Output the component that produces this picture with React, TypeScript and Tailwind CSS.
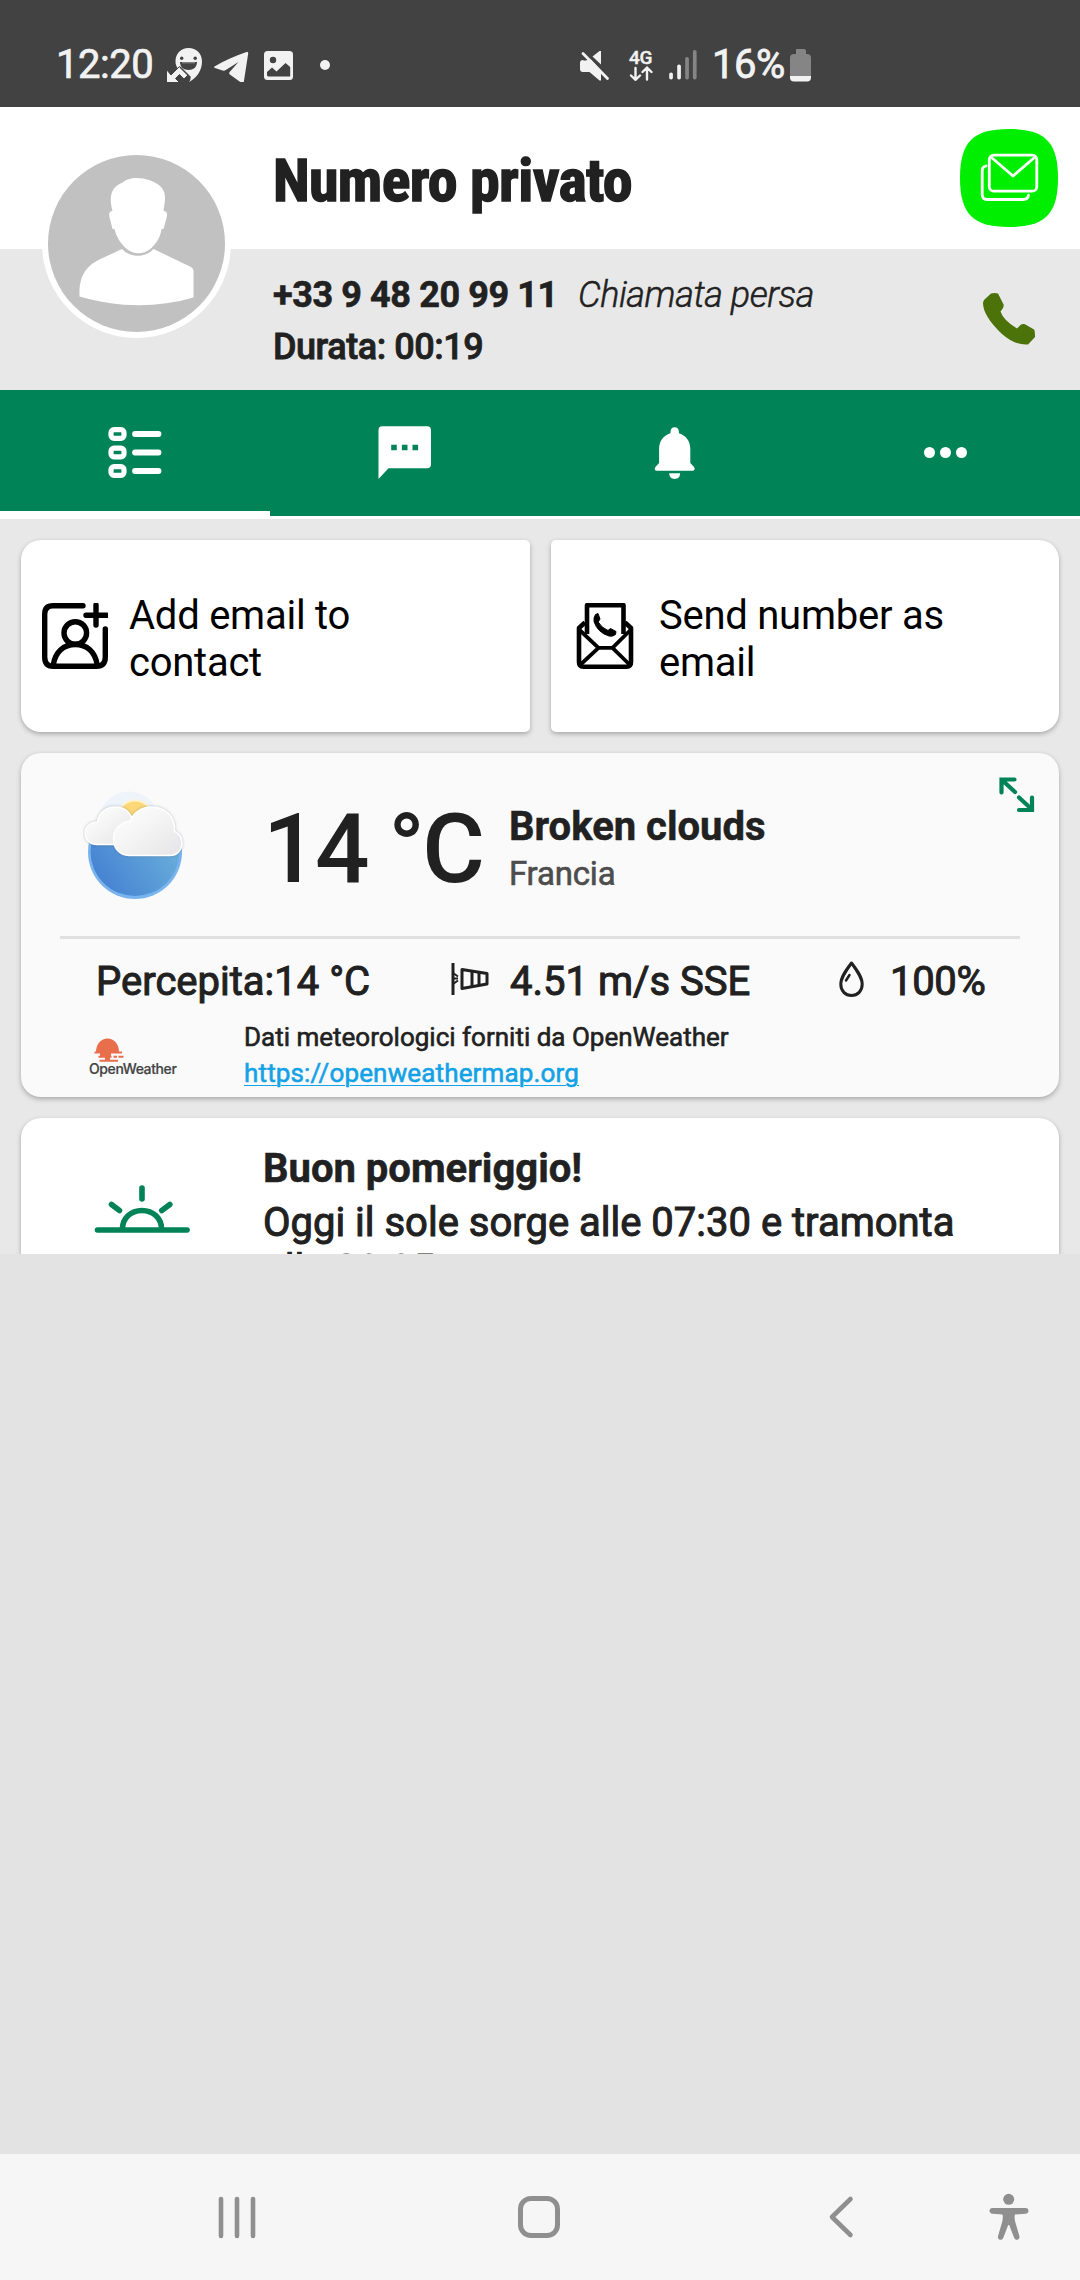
import { type ReactNode } from "react";

const cardShadow = "shadow-[0_2px_5px_rgba(0,0,0,0.28)]";

function StatusBar() {
  return (
    <div className="flex h-[107px] shrink-0 items-start bg-[#424242] pt-[48px] text-[40px] leading-[34px] text-[#f2f2f2]">
      <div className="ml-[56px] w-[111px] tracking-[-0.5px] [-webkit-text-stroke:0.7px]">12:20</div>
      <svg className="h-[34px] w-[35px]" viewBox="167 48 35 34">
        <path
          d="M188.5 48c8 0 13.500 5.500 13.500 13.500 0 9-5 16-13 20.500l1-5-7-5c-5-2-7.500-6-7.500-10.500C175.500 53.500 181 48 188.500 48z"
          fill="#f2f2f2"
        />
        <circle cx="181.700" cy="58.300" r="1.700" fill="#424242" />
        <circle cx="195.200" cy="58.300" r="1.700" fill="#424242" />
        <path d="M180 62h17c0 5-3.500 8-8.500 8s-8.500-3-8.500-8z" fill="#424242" />
        <path d="M182 62.300h13v1h-13z" fill="#9a9a9a" />
        <path
          d="M166.500 69.500v13h13l-4-4 4-4 4.500 4.500 4-4-8.500-8.500-8.500 8.500z"
          fill="#f2f2f2"
          stroke="#424242"
          strokeWidth="1"
        />
        <path d="M180 67l10 10c0 2 0 3-2 5" fill="none" stroke="#424242" strokeWidth="1.500" />
      </svg>
      <svg className="ml-[12px] h-[34px] w-[35px]" viewBox="214 48 35 34">
        <path
          d="M214.500 66.500c9-5.500 20-10.500 32-14.500 1.200-.3 1.800.3 1.700 1.500l-4.400 28.500c-.3 1.500-1.300 1.600-2.300.9l-11.300-8.200c-1.300-.9-1.300-1.900-.4-2.900l8.700-9.800-12.300 7.800c-1.600 1-2.700 1-4.400.5l-6.800-2.400c-1-.3-1.100-.9-.5-1.400z"
          fill="#f2f2f2"
        />
      </svg>
      <svg className="ml-[15px] h-[34px] w-[29px]" viewBox="264 48 29 34">
        <rect x="264" y="51" width="29" height="29" rx="3.500" fill="#f2f2f2" />
        <circle cx="273" cy="60" r="3.200" fill="#424242" />
        <path d="M267 72l5-4.500 4.500 4 9-8.500 4.700 4v9.500h-22l-1.200-1z" fill="#424242" />
      </svg>
      <div className="mt-[12px] ml-[27px] h-[10px] w-[10px] rounded-full bg-[#f2f2f2]" />

      <svg className="ml-[250px] h-[34px] w-[30px]" viewBox="580 48 30 34">
        <path d="M583 60l18 18.500v2h-1.500l-10-8.500h-6.500c-2 0-3-1-3-3v-6c0-2 1-3 3-3zM592.500 56.500l7-5.500h1.500v13.500z" fill="#f2f2f2" />
        <path d="M582 61l9-1.500 10 11v9l-11-8h-8z" fill="#f2f2f2" />
        <path d="M583 53.500l24.500 25" stroke="#f2f2f2" strokeWidth="2.800" strokeLinecap="round" />
      </svg>
      <div className="ml-[19px] w-[24px]">
        <div className="mt-[3px] text-[19px] leading-[14px] font-medium tracking-[-0.2px] [-webkit-text-stroke:0.4px]">4G</div>
        <svg className="mt-[1px] h-[15px] w-[24px]" viewBox="629 66 24 15" fill="none" stroke="#f2f2f2" strokeWidth="2.400" strokeLinecap="round">
          <path d="M635.500 68v11.500M631 75.500l4.500 4.300 4.500-4.300M647 79.500V68M642.500 72l4.500-4.300 4.500 4.300" />
        </svg>
      </div>
      <svg className="ml-[16px] h-[34px] w-[28px]" viewBox="669 48 28 34">
        <rect x="669.200" y="72.500" width="3.700" height="7" rx="1.800" fill="#f2f2f2" />
        <rect x="677.200" y="64.500" width="3.700" height="15" rx="1.800" fill="#f2f2f2" />
        <rect x="685.200" y="57" width="3.700" height="22.500" rx="1.800" fill="#858585" />
        <rect x="692.900" y="50" width="3.700" height="29.500" rx="1.800" fill="#858585" />
      </svg>
      <div className="ml-[15px] w-[78px] tracking-[-0.5px] [-webkit-text-stroke:0.8px]">16%</div>
      <svg className="h-[34px] w-[21px]" viewBox="790 48 21 34">
        <path d="M796 49h8q2 0 2 2v3h1q4 0 4 4v19H790V58q0-4 4-4h2v-3q0-2 0-2z" fill="#858585" />
        <path d="M790 76h21v1.500q0 4-4 4h-13q-4 0-4-4z" fill="#f2f2f2" />
      </svg>
    </div>
  );
}

function CallHeader() {
  return (
    <header className="relative shrink-0 text-[#212121]">
      <div className="flex h-[142px] items-start bg-white pl-[273px]">
        <h1 className="mt-[38px] w-[687px] font-['Roboto_Condensed'] text-[60px] leading-[72px] font-bold tracking-[-0.7px] [-webkit-text-stroke:1.4px]">
          Numero privato
        </h1>
        <svg className="mt-[22px] h-[98px] w-[98px]" viewBox="960 129 98 98">
          <path
            d="M1009 129c36 0 49 13 49 49s-13 49-49 49-49-13-49-49 13-49 49-49z"
            fill="#00ef00"
          />
          <g fill="none" stroke="#fff" strokeWidth="2.800" strokeLinecap="round" strokeLinejoin="round">
            <rect x="989.300" y="155.200" width="47.500" height="36" rx="4.500" />
            <path d="M991.500 157.500l21.500 18.500 21.500-18.500" />
            <path d="M986 166c-2.500.5-3.800 2-3.800 4.500v24c0 3 1.700 5 5 5h36c3.500 0 5-1.500 5.300-4.300" />
          </g>
        </svg>
      </div>
      <div className="flex h-[141px] items-start bg-[#e8e8e8] pl-[273px] text-[36px]">
        <div className="w-[710px] pt-[20px] leading-[52px]">
          <div className="flex">
            <span className="w-[305px] font-bold tracking-[-0.4px] [-webkit-text-stroke:0.6px]">+33 9 48 20 99 11</span>
            <span className="font-light tracking-[-0.45px] italic [-webkit-text-stroke:0.5px]">Chiamata persa</span>
          </div>
          <div className="font-medium tracking-[-0.45px] [-webkit-text-stroke:0.8px]">Durata: 00:19</div>
        </div>
        <svg className="mt-[44px] h-[52px] w-[52px]" viewBox="983 293 52 52">
          <path
            d="M991 293.500q3.500-1 7 0l5.800 11.500q0 3.500-3.300 6.500 3 9 16.500 17l4-4q2-1 4-.3l9 5.300q1 1 1 7.500l-7 7.500q-13 1-26-10.500Q983 316 983 303q0-2 1.500-3.500z"
            fill="#4c720a"
          />
        </svg>
      </div>
      {/* Avatar straddles the white and grey bands */}
      <svg className="absolute top-[42px] left-[42px] h-[189px] w-[189px]" viewBox="42 149 189 189">
        <circle cx="136.500" cy="243.500" r="94.500" fill="#fff" />
        <circle cx="136.500" cy="243.500" r="88.500" fill="#c1c1c1" />
        <path
          d="M122 183c6-6 18-6 27-3 11 4 17 9 16 20l-1.500 11c4 0 4 3 3 7l-3 11h-2c-1 8-5 14-10 19-8 7-18 7-26 0-5-5-9-11-11-19h-2l-3-12c-1-3 0-6 3-6-3-12-3-23 9-28z"
          fill="#fff"
        />
        <path
          d="M122 249c8 9 24 9 31.500 0l37.500 18q2.500 1.500 2.500 4v26.500c-38 11-76 10-114-1-.5-18 4-29 20-37z"
          fill="#fff"
        />
      </svg>
    </header>
  );
}

function Tabs() {
  return (
    <nav className="grid h-[129px] shrink-0 grid-cols-4 border-b-[3px] border-white bg-[#008457]">
      <div className="flex justify-center border-b-[5px] border-white pt-[36px]">
        <svg className="h-[54px] w-[54px]" viewBox="108 426 54 54" fill="none" stroke="#fff">
          {[434, 452.5, 471].map((y) => (
            <g key={y}>
              <rect x="111" y={y - 4.3} width="13" height="8.600" rx="3" strokeWidth="5.200" />
              <path d={`M135 ${y}h23.500`} strokeWidth="5.800" strokeLinecap="round" />
            </g>
          ))}
        </svg>
      </div>
      <div className="flex justify-center pt-[36px]">
        <svg className="h-[54px] w-[54px]" viewBox="378 426 54 54">
          <path d="M382 426.300h45q4 0 4 4v34q0 4-4 4h-38.500L378.500 479v-48.700q0-4 3.500-4z" fill="#fff" />
          <path d="M391.200 444.800h5.600v5.400h-5.600zM401.900 444.800h5.600v5.400h-5.600zM412.500 444.800h5.600v5.400h-5.600z" fill="#008457" />
        </svg>
      </div>
      <div className="flex justify-center pt-[36px]">
        <svg className="h-[54px] w-[42px]" viewBox="654 426 42 54" fill="#fff">
          <path d="M670.500 432q0-4.800 4.200-4.800t4.200 4.800v1.300c7.500 2.500 11.400 8.200 11.400 15.700v14l3.700 4q1 1.500.5 2.800-.6 1-2 1h-35.600q-1.400 0-2-1-.5-1.300.5-2.800l3.700-4v-14c0-7.500 3.900-13.200 11.400-15.700z" />
          <path d="M669.200 473.300h10.900c0 3.700-2.200 5.700-5.400 5.700s-5.500-2-5.500-5.700z" />
        </svg>
      </div>
      <div className="flex items-center justify-center gap-[5px] pb-[2px]">
        <span className="h-[11px] w-[11px] rounded-full bg-white" />
        <span className="h-[11px] w-[11px] rounded-full bg-white" />
        <span className="h-[11px] w-[11px] rounded-full bg-white" />
      </div>
    </nav>
  );
}

function ActionCard({ icon, className, children }: { icon: ReactNode; className: string; children: ReactNode }) {
  return (
    <div className={`flex h-[192px] bg-white pl-[21px] ${cardShadow} ${className}`}>
      <div className="mt-[63px] h-[66px] w-[66px] shrink-0">{icon}</div>
      <p className="mt-[52px] ml-[21px] w-[300px] text-[40px] leading-[47px] tracking-[-0.25px] text-black">{children}</p>
    </div>
  );
}

function ActionCards() {
  return (
    <div className="grid grid-cols-[509px_508px] gap-[21px]">
      <ActionCard
        className="rounded-l-[20px] rounded-r-[5px]"
        icon={
          <svg className="h-full w-full" viewBox="42 603 66 66" fill="none" stroke="#000" strokeWidth="5.400" strokeLinecap="round">
            <path d="M83 605.700H53c-6 0-8.300 3-8.300 8.300v43c0 6 2.300 9.300 8.300 9.300h43.500c6 0 8.800-3.300 8.800-9.300v-28" />
            <path d="M96 605v20M86 615.300h21" />
            <circle cx="75.300" cy="633" r="11.300" />
            <path d="M53.500 664c2-12 10-19.500 21.800-19.500S95 652 97 664" />
          </svg>
        }
      >
        Add email to contact
      </ActionCard>
      <ActionCard
        className="rounded-l-[5px] rounded-r-[20px]"
        icon={
          <svg className="h-full w-full" viewBox="572 603 66 66" fill="none" stroke="#000" strokeWidth="4.600" strokeLinejoin="round">
            <path d="M587 634v-28.800h36.500V634" />
            <path d="M585 622.500l-6 5.500v34c0 3 1.500 4.700 4.500 4.700h43c3 0 4.500-1.700 4.500-4.700v-34l-6-5.500" />
            <path d="M579 629.500l19.500 18.300h14l18.500-18.300M579.500 665.500l19-17.700M630.500 665.500l-18-17.700" strokeWidth="3.800" />
            <path
              d="M598 613.500l2 5.500-1.800 3q3.500 6 9.800 8.500l2.500-2 5.500 3-.5 3q-3 2.500-6.500 1.500-11.500-3.500-15-14.500-.5-4 1.500-7z"
              fill="#000"
              strokeWidth="1"
            />
          </svg>
        }
      >
        Send number as email
      </ActionCard>
    </div>
  );
}

function BrokenCloudsIcon() {
  return (
    <svg className="h-[114px] w-[102px]" viewBox="83 790 102 114">
      <defs>
        <linearGradient id="sky" x1="0" y1="1" x2="1" y2="0.300">
          <stop offset="0.100" stopColor="#4480d2" />
          <stop offset="1" stopColor="#6db4dc" />
        </linearGradient>
        <linearGradient id="cloud" x1="0" y1="0" x2="1" y2="1">
          <stop offset="0" stopColor="#fff" />
          <stop offset="0.400" stopColor="#f6f6f6" />
          <stop offset="1" stopColor="#e4e4e6" />
        </linearGradient>
        <clipPath id="lowerSky">
          <rect x="83" y="832" width="102" height="72" />
        </clipPath>
      </defs>
      <circle cx="129" cy="821.500" r="30" fill="#eef4fa" />
      <g clipPath="url(#lowerSky)">
        <circle cx="135" cy="852" r="47" fill="#79b4ef" />
        <circle cx="135" cy="851.500" r="44.500" fill="url(#sky)" />
      </g>
      <circle cx="135" cy="818" r="17.500" fill="#fdd878" stroke="#fff2cd" strokeWidth="2" />
      <g
        className="[filter:drop-shadow(0_0_1.5px_rgba(70,80,100,0.35))]"
        fill="url(#cloud)"
        stroke="#fff"
        strokeWidth="1.500"
      >
        <path d="M97 844.500c-7 0-12-5-12-11.500s5-10.500 12.500-11c1-9 8-15 18-15 8 0 14 5 17 12v25.500z" />
        <path d="M129 855.500c-9 0-15.500-7-15.500-16.500 0-9.500 7-17 17-18 2-8 11-14 21-14 15 0 24 11 23 24 5 3 7.500 6 7.500 12 0 7-5 12.500-12 12.500z" />
      </g>
    </svg>
  );
}

function OpenWeatherLogo() {
  return (
    <div className="w-[90px]">
      <svg className="ml-[6px] h-[24px] w-[30px]" viewBox="94 1038 30 24" fill="#e96e4c">
        <path d="M96 1052c0-8 5-13.500 11.500-13.500s11.500 5.500 11.500 13.500z" />
        <path d="M94.500 1051.500h27.500v2H94.500zM100 1053h11v3h-11zM98.500 1055.800h13v2h-13zM113.500 1055.800h3.500v2h-3.500zM118.500 1055.800h5v2h-5zM105 1057h5v3h-5zM99.500 1059.800h18.500v2H99.500z" />
      </svg>
      <div className="-mt-[1px] ml-[1px] font-[Inter] text-[14px] leading-[16px] font-medium tracking-[-0.4px] text-[#444] [-webkit-text-stroke:0.2px]">
        OpenWeather
      </div>
    </div>
  );
}

function WeatherCard() {
  return (
    <section className={`mt-[21px] h-[344px] rounded-[20px] bg-[#fafafa] text-[#212121] ${cardShadow}`}>
      <div className="flex h-[183px] items-start">
        <div className="mt-[37px] ml-[62px] w-[180px]">
          <BrokenCloudsIcon />
        </div>
        <div className="mt-[48px] w-[246px] text-[96px] leading-[96px] font-medium tracking-[-2.600px] whitespace-nowrap">14 °C</div>
        <div className="mt-[50px] w-[490px]">
          <div className="text-[40px] leading-[48px] font-bold [-webkit-text-stroke:0.5px]">Broken clouds</div>
          <div className="mt-[2px] text-[33px] leading-[42px] tracking-[-0.2px] text-[#4d4d4d] [-webkit-text-stroke:0.6px]">Francia</div>
        </div>
        <svg className="mt-[24px] h-[36px] w-[36px]" viewBox="999 777 36 36" fill="none" stroke="#008457" strokeWidth="4.200" strokeLinecap="round">
          <path d="M1014.500 779.500h-13v13M1002 780l13 12M1019 797.500l13 12M1032 797.500v12.500h-13" />
        </svg>
      </div>
      <div className="mx-[39px] h-[3px] bg-[#e0e0e0]" />
      <div className="mt-[19px] flex h-[48px] pl-[75px] text-[40px] leading-[48px] whitespace-nowrap [-webkit-text-stroke:1px]">
        <span className="w-[355px]">Percepita:14 °C</span>
        <svg className="mt-[5px] h-[32px] w-[38px]" viewBox="451 963 38 32" fill="none" stroke="#212121">
          <path d="M453 963v32" strokeWidth="3" />
          <path d="M462 969.500l25 4v10.500l-25 4.500z" strokeWidth="3" strokeLinejoin="round" />
          <path d="M472 971v16M479 972v13.500" strokeWidth="3" />
          <path d="M453 973l5 3.500M453 984l5-3.500M454 978.500h4" strokeWidth="2" />
        </svg>
        <span className="ml-[21px] w-[329px]">4.51 m/s SSE</span>
        <svg className="mt-[3px] h-[37px] w-[25px]" viewBox="839 961 25 37" fill="none" stroke="#212121" strokeLinecap="round">
          <path d="M851.500 963c-6 8-10.700 14.500-10.700 21 0 7 4.500 11.500 10.700 11.500s10.700-4.500 10.700-11.500c0-6.500-4.700-13-10.700-21z" strokeWidth="3" strokeLinejoin="round" />
          <path d="M849.500 975l-3.500 5.500" strokeWidth="2.500" />
        </svg>
        <span className="ml-[26px] tracking-[-0.3px]">100%</span>
      </div>
      <div className="mt-[13px] flex items-start">
        <div className="mt-[19px] ml-[67px] w-[156px]">
          <OpenWeatherLogo />
        </div>
        <div className="text-[26px] leading-[36px] [-webkit-text-stroke:0.6px]">
          <div>Dati meteorologici forniti da OpenWeather</div>
          <a className="tracking-[0.15px] text-[#14a2e6] underline decoration-1 underline-offset-3">https://openweathermap.org</a>
        </div>
      </div>
    </section>
  );
}

function GreetingCard() {
  return (
    <section className={`mt-[21px] flex h-[220px] items-start rounded-[20px] bg-white text-[40px] text-[#212121] ${cardShadow}`}>
      <svg className="mt-[66px] ml-[73px] h-[50px] w-[96px] shrink-0" viewBox="94 1184 96 50" fill="none" stroke="#008457" strokeWidth="5.600" strokeLinecap="round">
        <path d="M97.500 1230h89.500" />
        <path d="M122.500 1229c0-10.500 8-18.500 19.500-18.500s19.500 8 19.500 18.500" />
        <path d="M142 1188v11M111.500 1204.500l8 6M169.800 1204.500l-8 6" />
      </svg>
      <div className="mt-[27px] ml-[73px] w-[720px]">
        <div className="leading-[48px] font-bold [-webkit-text-stroke:0.5px]">Buon pomeriggio!</div>
        <div className="mt-[6px] leading-[47px] [-webkit-text-stroke:1px]">
          Oggi il sole sorge alle 07:30 e tramonta alle 20:05.
        </div>
      </div>
    </section>
  );
}

function NavigationBar() {
  return (
    <div className="flex h-[126px] shrink-0 items-start bg-[#f6f6f6] pt-[39px] text-[#8f8f8f]">
      <svg className="ml-[218px] h-[48px] w-[38px]" viewBox="218 2193 38 48" stroke="currentColor" strokeWidth="4.600" strokeLinecap="round">
        <path d="M221 2199v37M237 2199v37M253 2199v37" />
      </svg>
      <div className="mt-[3px] ml-[262px] h-[42px] w-[42px] rounded-[13px] border-[5px] border-[#8f8f8f]" />
      <svg className="ml-[268px] h-[48px] w-[28px]" viewBox="828 2193 28 48" fill="none" stroke="currentColor" strokeWidth="4.600" strokeLinecap="round" strokeLinejoin="round">
        <path d="M850.500 2199l-18.500 18 18.500 18" />
      </svg>
      <svg className="ml-[133px] h-[48px] w-[40px]" viewBox="989 2193 40 48" fill="currentColor">
        <circle cx="1008.700" cy="2199.300" r="5.500" />
        <path d="M992.500 2208h33c4 0 4 5.500 0 5.800l-10.500.7c-1 3 0 7 1 10l3.500 12c.4 3.500-4 4.500-5.300 1.500l-5-13h-1l-5 13c-1.300 3-5.700 2-5.300-1.500l3.500-12c1-3 2-7 1-10l-9.900-.7c-4-.3-4-5.800 0-5.800z" />
      </svg>
    </div>
  );
}

export default function App() {
  return (
    <div className="flex h-[2280px] w-[1080px] flex-col overflow-hidden bg-[#e3e3e3] font-[Roboto,sans-serif]">
      <StatusBar />
      <CallHeader />
      <Tabs />
      <main className="h-[735px] shrink-0 overflow-hidden bg-[#e8e8e8] px-[21px] pt-[21px]">
        <ActionCards />
        <WeatherCard />
        <GreetingCard />
      </main>
      <div className="flex-1" />
      <NavigationBar />
    </div>
  );
}
